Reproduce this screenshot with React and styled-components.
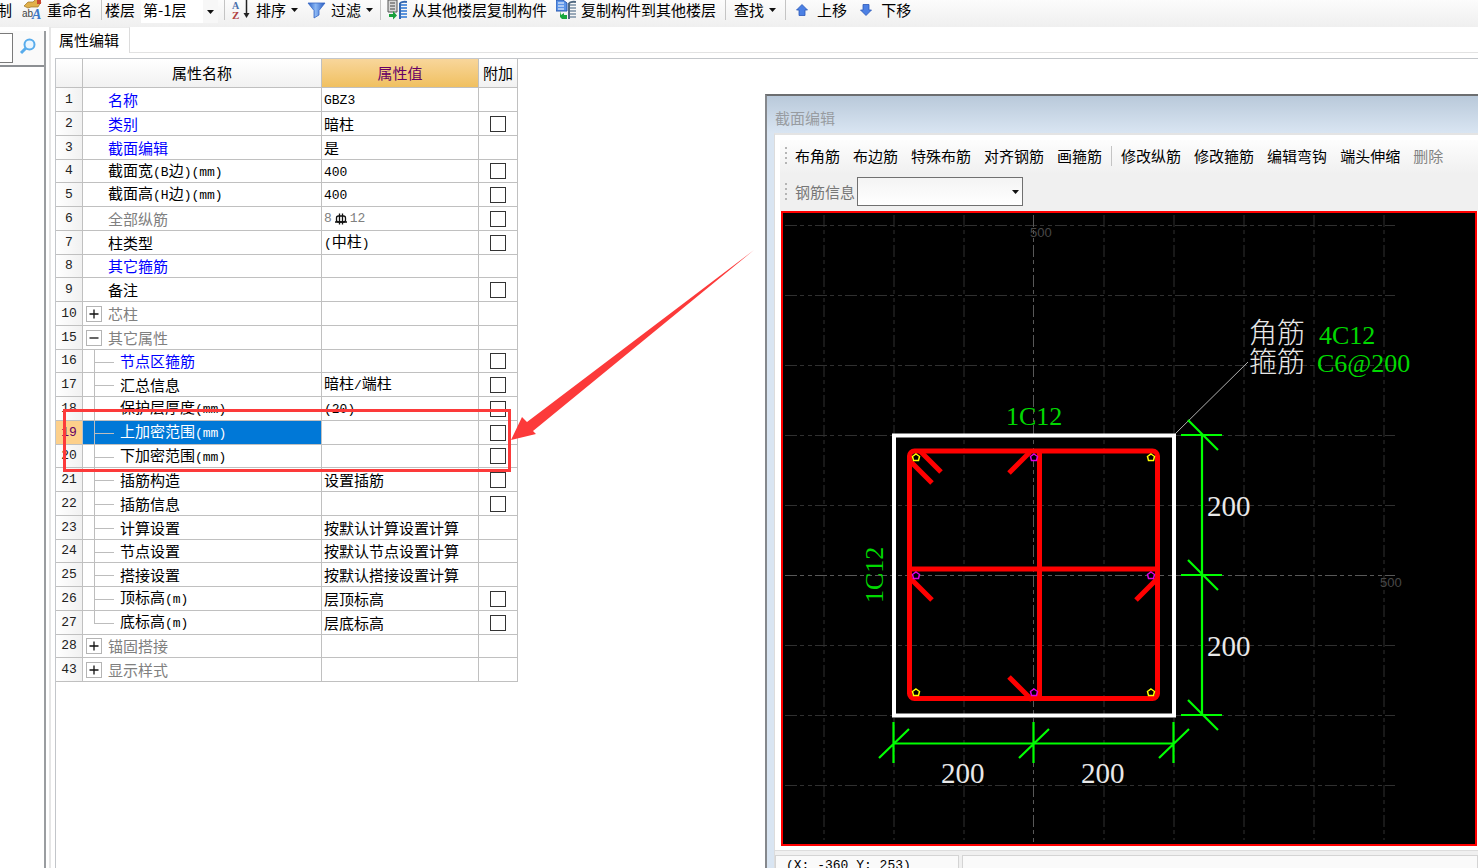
import React, { Component } from 'react';
import styled, { createGlobalStyle } from 'styled-components'

const GlobalStyle = createGlobalStyle`
* {
    box-sizing: border-box;
}
body {
    margin: 0;
    overflow: hidden;
    background: white;
    color: black;
    font-family: "Noto Sans CJK SC", sans-serif;
    font-size: 15px;
}
button, input, select {
    margin: 0;
    padding: 0;
    border: 0;
    border-radius: 0;
    background: none;
    color: inherit;
    font: inherit;
}
`

const Page = styled.div`
display: flex;
flex-direction: column;
height: 100vh;
position: relative;
overflow: hidden;
`

const MainToolbar = styled.div`
display: flex;
align-items: center;
height: 27px;
padding-bottom: 8px;
background: linear-gradient(#fcfcfc, #efefef);
white-space: nowrap;
`

const ToolButton = styled.button`
display: flex;
align-items: center;
flex: none;
gap: ${props => props.$gap || 5}px;
margin-right: ${props => props.$after || 9}px;
line-height: 20px;
svg {
    flex: none;
}
`

const ClippedButton = styled(ToolButton)`
width: 12px;
justify-content: flex-end;
overflow: hidden;
`

const Separator = styled.div`
flex: none;
width: 1px;
height: 20px;
margin-right: ${props => props.$after}px;
background: #c4c4c4;
`

const FloorLabel = styled.label`
display: flex;
flex: none;
align-self: flex-start;
gap: 6px;
line-height: 20px;
margin-right: 6px;
`

const SelectBox = styled.div`
position: relative;
display: flex;
width: ${props => props.$width}px;
svg {
    position: absolute;
    right: 4px;
    top: 50%;
    margin-top: -2px;
    pointer-events: none;
}
`

const FloorSelect = styled.select`
appearance: none;
width: 100%;
height: 23px;
padding: 0 0 4px 2px;
background: linear-gradient(#f7f7f7, #f7f7f7) right / 15px 100% no-repeat white;
`

const Workspace = styled.div`
display: flex;
flex: 1;
min-height: 0;
`

const SidePanel = styled.div`
display: flex;
flex-direction: column;
width: 46px;
padding-top: 4px;
background: white;
`

const SideBody = styled.div`
display: flex;
flex-direction: column;
flex: 1;
border-right: 2px solid #9a9da0;
`

const SearchRow = styled.div`
display: flex;
align-items: center;
gap: 6px;
height: 36px;
border-bottom: 2px solid #8c8f93;
background: #fafafa;
`

const SearchInput = styled.input`
width: 13px;
height: 30px;
border: 1px solid #7a7a7a;
border-left: 0;
background: white;
`

const PropertyPanel = styled.div`
display: flex;
flex-direction: column;
flex: 1;
margin-left: 3px;
border-left: 2px solid #e6e6e6;
`

const TabStrip = styled.div`
display: flex;
height: 26px;
border-bottom: 1px solid #e2e2e2;
`

const Tab = styled.button`
height: 26px;
width: 79px;
padding: 0 2px 2px 0;
border-right: 1px solid #dcdcdc;
border-top: 1px solid #ececec;
background: white;
line-height: 22px;
`

const TableFrame = styled.div`
flex: 1;
margin: 5px 0 0 4px;
border-left: 1px solid #c3c6ca;
border-top: 1px solid #c3c6ca;
`

const PropertyTable = styled.table`
table-layout: fixed;
width: 462px;
border-collapse: separate;
border-spacing: 0;
line-height: 20px;
th, td {
    height: 24px;
    padding: 0;
    border-right: 1px solid #c0c0c0;
    border-bottom: 1px solid #c0c0c0;
    font-weight: normal;
    white-space: nowrap;
}
thead th {
    height: 29px;
    background: linear-gradient(#ffffff, #f1f1f1);
}
tbody tr:nth-child(4n) > * {
    height: 23px;
}
`

const ValueHeader = styled.th`
&& {
    background: linear-gradient(#f8d69b, #f0c060);
    color: #660066;
}
`

const NumberCell = styled.th`
background: ${props => props.$current ? '#fdd08b' : 'linear-gradient(90deg, #ffffff, #f1f1f1)'};
color: ${props => props.$current ? '#660066' : '#222222'};
font-family: "Liberation Mono", monospace;
font-size: 13px;
`

const tones = { key: '#0000ff', plain: '#000000', muted: '#808080' }

const treeLines = {
  none: 'none',
  child: 'linear-gradient(#bdbdbd, #bdbdbd) 11px 0 / 1px 100% no-repeat, linear-gradient(#bdbdbd, #bdbdbd) 11px 12px / 20px 1px no-repeat',
  last: 'linear-gradient(#bdbdbd, #bdbdbd) 11px 0 / 1px 12px no-repeat, linear-gradient(#bdbdbd, #bdbdbd) 11px 12px / 20px 1px no-repeat'
}

const NameCell = styled.td`
background: ${props => treeLines[props.$tree]};
background-color: ${props => props.$current ? '#0078d7' : 'white'};
color: ${props => props.$current ? 'white' : tones[props.$tone]};
`

const NameInner = styled.div`
display: flex;
align-items: center;
gap: 6px;
height: 22px;
padding-left: ${props => props.$indent}px;
`

const ExpandButton = styled.button`
display: flex;
align-items: center;
justify-content: center;
width: 16px;
height: 16px;
border: 1px solid #b4b4b4;
background: white;
`

const ValueCell = styled.td`
color: ${props => tones[props.$tone]};
div {
    display: flex;
    align-items: center;
    gap: 1px;
    height: 22px;
    padding-left: 2px;
}
`

const CheckCell = styled.td`
text-align: center;
vertical-align: middle;
line-height: 0;
`

const Check = styled.input`
appearance: none;
width: 16px;
height: 16px;
border: 1px solid #333333;
background: white;
vertical-align: middle;
`

const Half = styled.span`
font-family: "Liberation Mono", monospace;
font-size: 13px;
`

const Highlight = styled.div`
position: absolute;
left: 63px;
top: 409px;
width: 448px;
height: 63px;
border: 3px solid #fc3a3a;
pointer-events: none;
`

const ArrowMark = styled.svg`
position: absolute;
left: 511px;
top: 250px;
pointer-events: none;
`

const Dialog = styled.section`
position: absolute;
left: 765px;
top: 94px;
right: 0;
bottom: 0;
display: flex;
flex-direction: column;
border-top: 2px solid #6c6e70;
border-left: 2px solid #85888c;
background: #d9e5f2;
`

const DialogTitle = styled.h2`
margin: 0;
height: 37px;
padding: 8px 0 0 8px;
background: linear-gradient(#b9c9da, #d9e5f2);
color: #989ca1;
font-size: 15px;
font-weight: normal;
line-height: 28px;
`

const DialogBody = styled.div`
display: flex;
flex-direction: column;
flex: 1;
min-height: 0;
margin-left: 7px;
border-left: 1px solid #dcdcdc;
border-top: 2px solid #e4e4e4;
background: white;
`

const DialogBars = styled.div`
margin: 5px 0 0 5px;
background: #f0f0f0;
`

const ActionBar = styled.div`
display: flex;
align-items: center;
height: 34px;
padding: 0 0 2px 5px;
background: linear-gradient(#fdfdfd, #f0f0f0);
white-space: nowrap;
`

const ActionButton = styled.button`
flex: none;
margin-right: ${props => props.$last ? 9 : 13}px;
line-height: 20px;
&:disabled {
    color: #838383;
}
`

const Grip = styled.div`
flex: none;
width: 2px;
height: 18px;
margin-right: 8px;
background: repeating-linear-gradient(#b5b5b5 0 2px, transparent 2px 5px);
`

const InfoBar = styled.div`
display: flex;
align-items: center;
height: 37px;
padding: 0 0 2px 5px;
label {
    margin-right: 2px;
    color: #777777;
}
`

const InfoSelect = styled.select`
appearance: none;
width: 100%;
height: 29px;
border: 1px solid #707070;
background: linear-gradient(#f4f4f4, #ffffff);
`

const Canvas = styled.div`
flex: 1;
min-height: 0;
overflow: hidden;
margin: 0 1px 0 6px;
border: 2px solid #ff0000;
background: black;
svg {
    display: block;
}
`

const StatusBar = styled.div`
display: flex;
flex: none;
gap: 3px;
height: 18px;
margin-top: 4px;
padding-top: 4px;
border-top: 1px solid #dddddd;
background: #f0f0f0;
overflow: hidden;
`

const StatusCell = styled.div`
width: ${props => props.$width ? props.$width + 'px' : 'auto'};
flex: ${props => props.$width ? 'none' : '1'};
height: 24px;
padding-left: 10px;
border: 1px solid #d4d4d4;
background: #fafafa;
font-family: "Liberation Mono", monospace;
font-size: 13px;
line-height: 20px;
white-space: pre;
`

const Drawing = styled.svg`
.cad {
    font-family: "Liberation Serif", "Noto Sans CJK SC", serif;
    font-size: 29px;
    fill: #e8e8e8;
}
.note {
    font-family: "Noto Sans CJK SC", sans-serif;
    font-size: 28px;
    font-weight: 300;
    fill: #e8e8e8;
}
.green {
    font-size: 26px;
    fill: #00d800;
}
.tick {
    font-family: "Liberation Sans", sans-serif;
    font-size: 13px;
    fill: #484848;
}
`

const rows = [
  { no: 1, name: '名称', tone: 'key', value: 'GBZ3' },
  { no: 2, name: '类别', tone: 'key', value: '暗柱', check: true },
  { no: 3, name: '截面编辑', tone: 'key', value: '是' },
  { no: 4, name: '截面宽(B边)(mm)', value: '400', check: true },
  { no: 5, name: '截面高(H边)(mm)', value: '400', check: true },
  { no: 6, name: '全部纵筋', tone: 'muted', value: '8#12', check: true },
  { no: 7, name: '柱类型', value: '(中柱)', check: true },
  { no: 8, name: '其它箍筋', tone: 'key' },
  { no: 9, name: '备注', check: true },
  { no: 10, name: '芯柱', tone: 'muted', toggle: 'plus' },
  { no: 15, name: '其它属性', tone: 'muted', toggle: 'minus' },
  { no: 16, name: '节点区箍筋', tone: 'key', tree: 'child', check: true },
  { no: 17, name: '汇总信息', value: '暗柱/端柱', tree: 'child', check: true },
  { no: 18, name: '保护层厚度(mm)', value: '(20)', tree: 'child', check: true },
  { no: 19, name: '上加密范围(mm)', tree: 'child', check: true },
  { no: 20, name: '下加密范围(mm)', tree: 'child', check: true },
  { no: 21, name: '插筋构造', value: '设置插筋', tree: 'child', check: true },
  { no: 22, name: '插筋信息', tree: 'child', check: true },
  { no: 23, name: '计算设置', value: '按默认计算设置计算', tree: 'child' },
  { no: 24, name: '节点设置', value: '按默认节点设置计算', tree: 'child' },
  { no: 25, name: '搭接设置', value: '按默认搭接设置计算', tree: 'child' },
  { no: 26, name: '顶标高(m)', value: '层顶标高', tree: 'child', check: true },
  { no: 27, name: '底标高(m)', value: '层底标高', tree: 'last', check: true },
  { no: 28, name: '锚固搭接', tone: 'muted', toggle: 'plus' },
  { no: 43, name: '显示样式', tone: 'muted', toggle: 'plus' }
]

const Caret = () => (
  <svg width="7" height="4" viewBox="0 0 7 4"><path d="M0 0h7L3.5 4z" fill="#111" /></svg>
)

const RenameIcon = () => (
  <svg width="20" height="20" viewBox="0 0 20 20">
    <path d="M2 6l4-4h5l3-3 5 3-3 5H9L6 8z" fill="#e0b04a" stroke="#9c7426" strokeWidth="0.7" />
    <path d="M15 0h4v4h-4z" fill="#c8452f" />
    <text x="0" y="17" fontFamily="Liberation Sans, sans-serif" fontSize="10" fill="#444">ab</text>
    <text x="10" y="19" fontFamily="Liberation Serif, serif" fontSize="14" fontStyle="italic" fontWeight="bold" fill="#3a78c8">A</text>
  </svg>
)

const SortIcon = () => (
  <svg width="20" height="20" viewBox="0 0 20 20">
    <text x="1" y="9" fontFamily="Liberation Serif, serif" fontSize="10" fontWeight="bold" fill="#4a70ac">A</text>
    <text x="1" y="19" fontFamily="Liberation Serif, serif" fontSize="11" fontWeight="bold" fill="#b04040">Z</text>
    <path d="M15.500 0v15" stroke="#222" strokeWidth="1.500" />
    <path d="M12.500 13h6L15.500 18z" fill="#222" />
  </svg>
)

const FilterIcon = () => (
  <svg width="19" height="18" viewBox="0 0 19 18">
    <defs>
      <linearGradient id="funnel">
        <stop offset="0" stopColor="#2c62c8" />
        <stop offset="0.45" stopColor="#8cb8f4" />
        <stop offset="1" stopColor="#2458c0" />
      </linearGradient>
    </defs>
    <path d="M1 2h17l-6 7.500V14L7 17V9.500z" fill="url(#funnel)" stroke="#3768c4" strokeWidth="0.8" />
  </svg>
)

const CopyFromIcon = () => (
  <svg width="20" height="20" viewBox="0 0 20 20">
    <path d="M1 0h9v12H1z" fill="#d8d8d8" stroke="#555" />
    <path d="M3 3h5M3 6h5M3 9h5" stroke="#444" />
    <path d="M2 14h4v-3l4 4.500-4 4V17H2z" fill="#18a03c" />
    <path d="M13 3q3-2 7-1M13 3v16" stroke="#3468b0" strokeWidth="2" fill="none" />
    <path d="M14 5h6M14 8h6M14 11h6M14 14h6M14 17h6" stroke="#5c94dc" strokeWidth="2" />
  </svg>
)

const CopyToIcon = () => (
  <svg width="20" height="20" viewBox="0 0 20 20">
    <path d="M0 0h7l4 3v8H0z" fill="#5c94e8" stroke="#2858b0" />
    <path d="M2 3h6M2 6h6M2 9h6" stroke="white" />
    <path d="M4 11l1 4 3-2v2h3v4H6l-2-2z" fill="#18a83c" />
    <path d="M13 3q3-2 7-1M13 3v16" stroke="#506880" strokeWidth="2" fill="none" />
    <path d="M14 5h6M14 8h6M14 11h6M14 14h6M14 17h6" stroke="#98a8b8" strokeWidth="2" />
  </svg>
)

const MoveIcon = ({ down }) => (
  <svg width="12" height="12" viewBox="0 0 12 12">
    <path d="M6 0.500l5.500 5.500H9v5.500H3V6H0.500z" fill="#4c80e4" stroke="#2c58b8" strokeWidth="0.8"
      transform={down ? 'rotate(180 6 6)' : undefined} />
  </svg>
)

const SearchIcon = () => (
  <svg width="18" height="18" viewBox="0 0 18 18">
    <circle cx="10.500" cy="7.500" r="5" fill="#eaf6ff" stroke="#58acec" strokeWidth="2" />
    <path d="M7 11L2 16" stroke="#58acec" strokeWidth="3" />
  </svg>
)

const RebarSign = () => (
  <svg width="16" height="14" viewBox="0 0 16 14">
    <rect x="3.500" y="4" width="9" height="6" rx="2" fill="none" stroke="#111" strokeWidth="1.300" />
    <path d="M6.500 1.500v11M9.500 1.500v11M2 10h12" fill="none" stroke="#111" strokeWidth="1.300" />
  </svg>
)

// Latin runs are set in a narrower monospace face, the rest in the CJK face
const MixedText = ({ text }) => {
  const parts = text.split(/([\x20-\x7e]+)/).filter(part => part)
  return (
    <span>
      {parts.map((part, index) => /^[\x20-\x7e]/.test(part) ? <Half key={index}>{part}</Half> : part)}
    </span>
  )
}

const Value = ({ text }) => {
  if (text.includes('#')) {
    const [count, size] = text.split('#')
    return <><Half>{count}</Half><RebarSign /><Half>{size}</Half></>
  }
  return <MixedText text={text} />
}

const gridX = [824, 894, 964, 1104, 1174, 1244, 1314, 1384]
const gridY = [225, 295, 365, 435, 505, 645, 715, 785]
const corners = [[916, 457], [1151, 457], [916, 692], [1151, 692]]
const middles = [[1034, 457], [916, 575], [1151, 575], [1034, 692]]

const Bar = ({ x, y, color }) => (
  <path d={`M${x} ${y - 3}l3.500 2.500-1 4h-5l-1-4z`} fill="black" stroke={color} strokeWidth="1.500" />
)

const SectionDrawing = () => (
  <Drawing width="693" height="631" viewBox="783 213 693 631">
    <g stroke="#303030" strokeDasharray="12 3 4 4 4 3">
      {gridX.map(x => <path key={x} d={`M${x} 215V840`} />)}
      {gridY.map(y => <path key={y} d={`M785 ${y}.500H1395`} />)}
    </g>
    <g stroke="#585858" strokeDasharray="12 3 4 4 4 3">
      <path d="M1033.500 215V843" />
      <path d="M785 575.500H1395" />
    </g>
    <text className="tick" x="1030" y="237">500</text>
    <text className="tick" x="1380" y="587">500</text>

    <rect x="894" y="435.500" width="280" height="280" fill="none" stroke="white" strokeWidth="4" />
    <path d="M1175 434L1248 362" stroke="#b0b0b0" />

    <g stroke="#ff0000" strokeWidth="5" fill="none">
      <rect x="909.500" y="451" width="248" height="247.500" rx="5" />
      <path d="M1039.500 451V698M910 569H1157" />
      <path d="M911 462L932 483M920 451L941 472M1030 452L1009 473" />
      <path d="M911 579L932 600M1157 579L1136 600M1009 677L1032 700" />
    </g>
    {corners.map(([x, y]) => <Bar key={`${x}-${y}`} x={x} y={y} color="#ffff00" />)}
    {middles.map(([x, y]) => <Bar key={`${x}-${y}`} x={x} y={y} color="#e000e0" />)}

    <g stroke="#00ff00" strokeWidth="2.200" fill="none">
      <path d="M893 743.500H1174M1202 435V715" />
      {[893, 1033, 1173].map(x => <path key={x} d={`M${x}.500 722V763M${x - 14} 758l30-29`} />)}
      {[435, 575, 715].map(y => <path key={y} d={`M1181 ${y}H1222M1188 ${y - 15}l30 30`} />)}
    </g>

    <text className="cad" x="941" y="783">200</text>
    <text className="cad" x="1081" y="783">200</text>
    <text className="cad" x="1207" y="516">200</text>
    <text className="cad" x="1207" y="656">200</text>
    <text className="cad green" x="1006" y="425">1C12</text>
    <text className="cad green" transform="translate(883 603) rotate(-90)">1C12</text>
    <text className="note" x="1249" y="343">角筋</text>
    <text className="note" x="1249" y="372">箍筋</text>
    <text className="cad green" x="1319" y="344">4C12</text>
    <text className="cad green" x="1317" y="372">C6@200</text>
  </Drawing>
)

class App extends Component {
  state = {
    current: 19,
    checked: {}
  }

  toggleCheck = (no) => {
    const checked = { ...this.state.checked }
    checked[no] = !checked[no]
    this.setState({ checked })
  }

  render() {
    const tableRows = rows.map((row) => {
      const current = row.no === this.state.current
      const tone = row.tone || 'plain'
      const tree = row.tree || 'none'
      const indent = row.toggle ? 3 : row.tree ? 37 : 25
      return (
        <tr key={row.no} onClick={() => this.setState({ current: row.no })}>
          <NumberCell scope="row" $current={current}>{row.no}</NumberCell>
          <NameCell $tone={tone} $tree={tree} $current={current}>
            <NameInner $indent={indent}>
              {row.toggle && (
                <ExpandButton aria-label={row.name}>
                  <svg width="10" height="10" viewBox="0 0 10 10">
                    <path d={row.toggle === 'plus' ? 'M0.500 5h9M5 0.500v9' : 'M0.500 5h9'} stroke="#111" strokeWidth="1.300" />
                  </svg>
                </ExpandButton>
              )}
              <MixedText text={row.name} />
            </NameInner>
          </NameCell>
          <ValueCell $tone={tone === 'muted' ? 'muted' : 'plain'}>
            <div>{row.value && <Value text={row.value} />}</div>
          </ValueCell>
          <CheckCell>
            {row.check && (
              <Check type="checkbox" aria-label={`附加 ${row.name}`}
                checked={!!this.state.checked[row.no]}
                onChange={() => this.toggleCheck(row.no)} />
            )}
          </CheckCell>
        </tr>
      )
    })

    return (
      <Page>
        <GlobalStyle />
        <MainToolbar>
          <ClippedButton $after={10}>制</ClippedButton>
          <ToolButton><RenameIcon />重命名</ToolButton>
          <Separator $after={3} />
          <FloorLabel>
            楼层
            <SelectBox $width={77}>
              <FloorSelect><option>第-1层</option></FloorSelect>
              <Caret />
            </SelectBox>
          </FloorLabel>
          <Separator $after={6} />
          <ToolButton><SortIcon />排序<Caret /></ToolButton>
          <ToolButton $after={7}><FilterIcon />过滤<Caret /></ToolButton>
          <Separator $after={6} />
          <ToolButton><CopyFromIcon />从其他楼层复制构件</ToolButton>
          <ToolButton><CopyToIcon />复制构件到其他楼层</ToolButton>
          <Separator $after={8} />
          <ToolButton>查找<Caret /></ToolButton>
          <Separator $after={10} />
          <ToolButton $gap={9} $after={13}><MoveIcon />上移</ToolButton>
          <ToolButton $gap={9}><MoveIcon down />下移</ToolButton>
        </MainToolbar>

        <Workspace>
          <SidePanel>
            <SideBody>
              <SearchRow>
                <SearchInput aria-label="搜索" />
                <button aria-label="查找"><SearchIcon /></button>
              </SearchRow>
            </SideBody>
          </SidePanel>
          <PropertyPanel>
            <TabStrip><Tab>属性编辑</Tab></TabStrip>
            <TableFrame>
              <PropertyTable>
                <colgroup>
                  <col style={{ width: 27 }} />
                  <col style={{ width: 239 }} />
                  <col style={{ width: 157 }} />
                  <col style={{ width: 39 }} />
                </colgroup>
                <thead>
                  <tr>
                    <th></th>
                    <th>属性名称</th>
                    <ValueHeader>属性值</ValueHeader>
                    <th>附加</th>
                  </tr>
                </thead>
                <tbody>{tableRows}</tbody>
              </PropertyTable>
            </TableFrame>
          </PropertyPanel>
        </Workspace>

        <Highlight />
        <ArrowMark width="243" height="190" viewBox="0 0 243 190">
          <path d="M0 190L11 167L16 172L243 0L22 181L25 184z" fill="#fc3a3a" />
        </ArrowMark>

        <Dialog>
          <DialogTitle>截面编辑</DialogTitle>
          <DialogBody>
            <DialogBars>
              <ActionBar>
                <Grip />
                <ActionButton>布角筋</ActionButton>
                <ActionButton>布边筋</ActionButton>
                <ActionButton>特殊布筋</ActionButton>
                <ActionButton>对齐钢筋</ActionButton>
                <ActionButton $last>画箍筋</ActionButton>
                <Separator $after={9} />
                <ActionButton>修改纵筋</ActionButton>
                <ActionButton>修改箍筋</ActionButton>
                <ActionButton>编辑弯钩</ActionButton>
                <ActionButton>端头伸缩</ActionButton>
                <ActionButton disabled>删除</ActionButton>
              </ActionBar>
              <InfoBar>
                <Grip />
                <label htmlFor="rebar-info">钢筋信息</label>
                <SelectBox $width={166}>
                  <InfoSelect id="rebar-info" />
                  <Caret />
                </SelectBox>
              </InfoBar>
            </DialogBars>
            <Canvas><SectionDrawing /></Canvas>
            <StatusBar>
              <StatusCell $width={184}>(X: -360 Y: 253)</StatusCell>
              <StatusCell />
            </StatusBar>
          </DialogBody>
        </Dialog>
      </Page>
    );
  }
}

export default App;
